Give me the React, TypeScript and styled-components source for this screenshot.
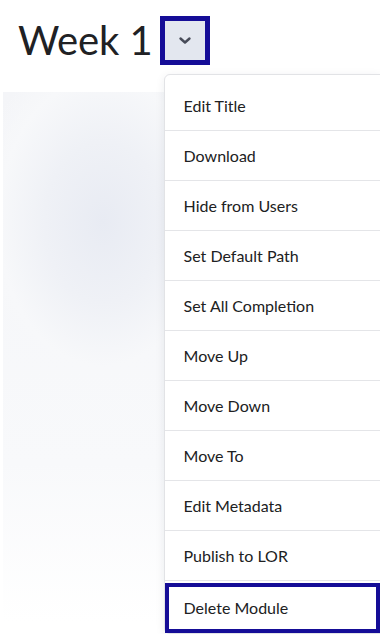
import React from "react";
import styled, { createGlobalStyle } from "styled-components";

const Global = createGlobalStyle`
  html, body { margin: 0; padding: 0; background: #ffffff; overflow: hidden; }
  body { font-family: Lato, "Open Sans", sans-serif; color: #202122; }
`;

const Page = styled.div`
  position: relative;
  width: 380px;
  height: 634px;
  overflow: hidden;
  background: #ffffff;
`;

const Header = styled.div`
  display: flex;
  align-items: center;
  gap: 7px;
  padding: 15px 0 0 18px;
  height: 50px;
`;

const Title = styled.h1`
  margin: 0;
  font-family: Lato, sans-serif;
  font-weight: 400;
  font-size: 40px;
  line-height: 50px;
  color: #202124;
  letter-spacing: -0.1px;
`;

const MenuAnchor = styled.div`
  position: relative;
  z-index: 2;
`;

const ToggleButton = styled.button`
  display: flex;
  align-items: center;
  justify-content: center;
  box-sizing: border-box;
  width: 50px;
  height: 49px;
  padding: 0;
  background: #e3e7ef;
  border: 5px solid #150d97;
  cursor: pointer;
`;

const Menu = styled.ul`
  position: absolute;
  top: calc(100% + 9px);
  left: 4px;
  width: 215px;
  margin: 0;
  padding: 6px 0 0;
  list-style: none;
  background: #ffffff;
  border: 1px solid #e2e3e6;
  border-radius: 6px 0 0 6px;
  box-shadow: 0 2px 10px rgba(30, 40, 60, 0.08);
`;

const Item = styled.li<{ $focused?: boolean }>`
  box-sizing: border-box;
  display: flex;
  align-items: center;
  height: 50px;
  padding: 0 19px;
  font-size: 16px;
  color: #202122;
  border-bottom: 1px solid #e4e5e8;
  ${(p) =>
    p.$focused
      ? `
    border-bottom: none;
    box-shadow: inset 0 0 0 4px #150d97;
    margin-top: 2px;
  `
      : ""}
`;

const Backdrop = styled.div`
  margin: 27px 0 0 3px;
  width: 200px;
  height: 530px;
  background: radial-gradient(
    ellipse 130px 180px at 100px 130px,
    #e8ebf3 0%,
    #eff1f6 45%,
    #f7f8fa 80%,
    rgba(255, 255, 255, 0) 100%
  ),
  linear-gradient(180deg, #f4f5f8 0%, #f8f9fb 70%, #ffffff 100%);
`;

const items = [
  "Edit Title",
  "Download",
  "Hide from Users",
  "Set Default Path",
  "Set All Completion",
  "Move Up",
  "Move Down",
  "Move To",
  "Edit Metadata",
  "Publish to LOR",
  "Delete Module",
];

export default function App() {
  return (
    <Page>
      <Global />
      <Header>
        <Title>Week 1</Title>
        <MenuAnchor>
          <ToggleButton aria-label="Module options">
            <svg width="14" height="9" viewBox="0 0 14 9" fill="none">
              <polyline
                points="2.5,2.5 7,6.5 11.5,2.5"
                stroke="#474b58"
                strokeWidth="2.4"
                strokeLinecap="round"
                strokeLinejoin="round"
              />
            </svg>
          </ToggleButton>
          <Menu>
            {items.map((t, i) => (
              <Item key={t} $focused={i === items.length - 1}>
                {t}
              </Item>
            ))}
          </Menu>
        </MenuAnchor>
      </Header>
      <Backdrop />
    </Page>
  );
}
